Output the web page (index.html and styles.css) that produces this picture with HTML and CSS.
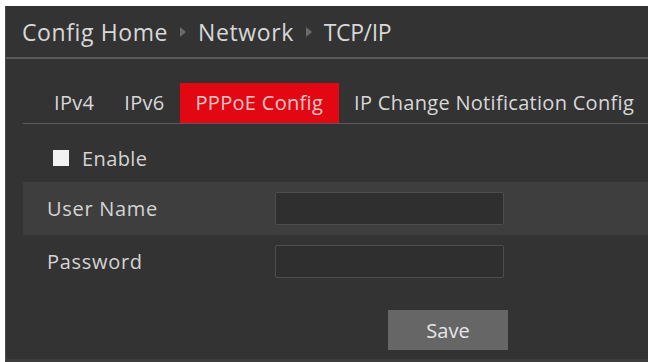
FILE: index.html
```html
<!DOCTYPE html>
<html lang="en">
<head>
    <meta charset="UTF-8">
    <meta name="viewport" content="width=device-width, initial-scale=1.0">
    <title>TCP/IP - PPPoE Config</title>
    <link rel="stylesheet" href="styles.css">
</head>
<body>
    <div class="panel">
        <div class="crumbs">
            <span>Config Home</span>
            <span class="arrow"></span>
            <span>Network</span>
            <span class="arrow"></span>
            <span class="last">TCP/IP</span>
        </div>

        <div class="tabs">
            <div class="tab">IPv4</div>
            <div class="tab">IPv6</div>
            <div class="tab active">PPPoE Config</div>
            <div class="tab">IP Change Notification Config</div>
        </div>

        <label class="enable"><span class="box"></span> Enable</label>

        <div class="form">
            <div class="row shaded">
                <div class="name">User Name</div>
                <input type="text" class="field">
            </div>
            <div class="row">
                <div class="name">Password</div>
                <input type="password" class="field">
            </div>
            <div class="actions">
                <button class="save">Save</button>
            </div>
        </div>
    </div>
</body>
</html>
```

FILE: styles.css
```css
body {
    margin: 0;
    background: #fff;
    font-family: "Open Sans", "Noto Sans", sans-serif;
    color: #d4d4d4;
}
.panel {
    margin: 6px 0 0 5px;
    height: 353px;
    background: #333;
    border-left: 1px solid #4c4c4c;
    border-bottom: 3px solid #3d3d3d;
    overflow: hidden;
}
.crumbs {
    height: 51px;
    display: flex;
    align-items: center;
    gap: 12px;
    padding-left: 16px;
    font-size: 23px;
    letter-spacing: 0.6px;
    color: #d8d8d8;
    border-bottom: 2px solid #5a5a5a;
}
.crumbs .last {
    letter-spacing: -0.4px;
}
.arrow {
    width: 0;
    height: 0;
    border-top: 5px solid transparent;
    border-bottom: 5px solid transparent;
    border-left: 6px solid #6a6a6a;
}
.tabs {
    display: flex;
    margin: 24px 0 0 17px;
    padding-left: 14px;
    border-bottom: 1px solid #5a5a5a;
}
.tab {
    flex-shrink: 0;
    white-space: nowrap;
    height: 40px;
    line-height: 40px;
    padding: 0 15px;
    font-size: 20px;
    letter-spacing: 0.3px;
    color: #d8d8d8;
}
.tab:first-child {
    padding-left: 17px;
}
.tab.active {
    padding: 0 16px;
    background: #e30613;
    color: #f6c8c8;
}
.enable {
    display: flex;
    align-items: center;
    gap: 13px;
    margin: 25px 0 0 47px;
    height: 18px;
    font-size: 20px;
    letter-spacing: 0.4px;
}
.box {
    width: 16px;
    height: 16px;
    background: #f2f2f2;
}
.form {
    margin: 15px 0 0 17px;
}
.row {
    display: flex;
    align-items: center;
    height: 53px;
}
.row.shaded {
    background: #3e3e3e;
}
.name {
    width: 252px;
    padding-left: 24px;
    box-sizing: border-box;
    font-size: 20px;
    letter-spacing: 0.7px;
}
.field {
    width: 229px;
    height: 33px;
    box-sizing: border-box;
    background: #2f2f2f;
    border: 1px solid #4d4d4d;
    border-radius: 2px;
    color: #ddd;
}
.actions {
    padding: 22px 0 0 365px;
}
.save {
    width: 120px;
    height: 40px;
    border: none;
    background: #666;
    color: #e6e6e6;
    font-family: inherit;
    font-size: 20px;
}
```
